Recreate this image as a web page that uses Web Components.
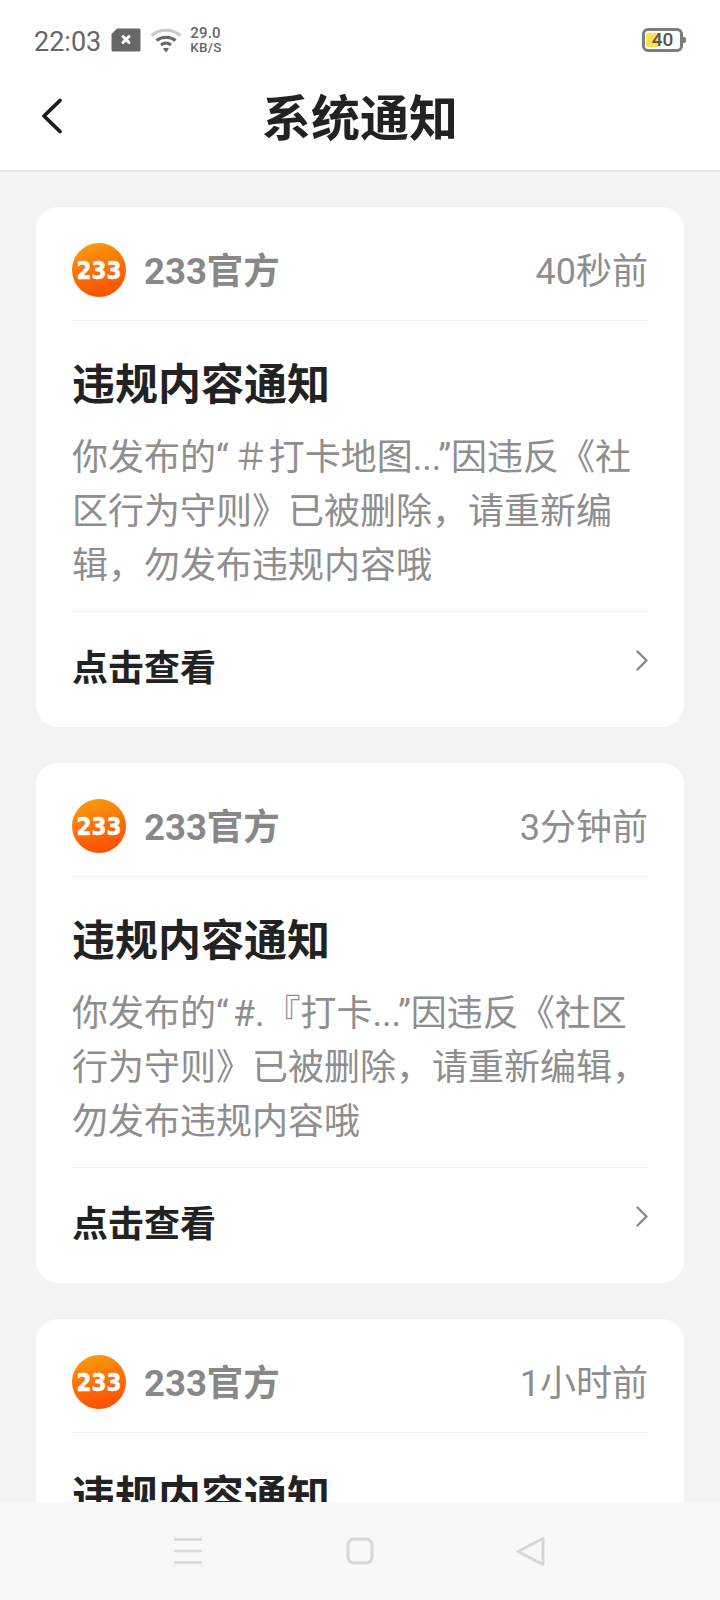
<!DOCTYPE html>
<html lang="zh"><head><meta charset="utf-8">
<style>
html,body{margin:0;padding:0;width:720px;height:1600px;overflow:hidden;background:#f4f4f4;font-family:Roboto,"Noto Sans CJK SC",sans-serif}
.q{letter-spacing:4px}
</style></head><body>
<app-screen>
<status-bar slot="top"></status-bar>
<title-bar slot="top" title="系统通知"></title-bar>
<notice-card time="40秒前">你发布的<span class="q">“</span>＃打卡地图...”因违反《社<br>区行为守则》已被删除，请重新编<br>辑，勿发布违规内容哦</notice-card>
<notice-card time="3分钟前">你发布的<span class="q">“</span>#.『打卡...”因违反《社区<br>行为守则》已被删除，请重新编辑，<br>勿发布违规内容哦</notice-card>
<notice-card time="1小时前"></notice-card>
<nav-bar slot="bottom"></nav-bar>
</app-screen>
<script>
const def=(name,html,init)=>customElements.define(name,class extends HTMLElement{
  constructor(){super();this.attachShadow({mode:'open'}).innerHTML=html;}
  connectedCallback(){init&&init(this,this.shadowRoot);}
});
def('app-screen',`<style>
:host{display:flex;flex-direction:column;width:720px;height:1600px;overflow:hidden}
.main{flex:1;min-height:0;overflow:hidden;padding:35px 36px 0;display:flex;flex-direction:column;gap:36px}
::slotted(notice-card){flex:none}
</style><slot name="top"></slot><div class="main"><slot></slot></div><slot name="bottom"></slot>`);
def('status-bar',`<style>
:host{display:flex;align-items:center;height:80px;background:#fff;padding:0 34px;box-sizing:border-box;color:#666;font-family:Roboto,sans-serif}
.t{font-size:27px;line-height:1;margin-top:5px}
.sim{margin-left:10px;display:block}
.wifi{margin-left:9px;margin-top:-1px;display:block}
.sp{margin-left:8px;font-size:15px;line-height:14px;font-weight:500;letter-spacing:.2px}
.sp b{display:block;font-weight:500}.sp i{display:block;font-style:normal;font-size:13.5px}
.grow{flex:1}
.bat{position:relative;width:41px;height:24px;border:3px solid #7d7d7d;border-radius:6px;box-sizing:border-box;margin-right:3px;background:#fff}
.bat::before{content:"";position:absolute;left:1px;top:2px;bottom:2px;width:13px;background:#fbe04f;border-radius:2px}
.bat::after{content:"";position:absolute;right:-6px;top:6px;width:3px;height:6px;background:#7d7d7d;border-radius:0 2px 2px 0}
.bat span{position:absolute;inset:0;text-align:center;font-size:19px;line-height:18px;font-weight:500;color:#555}
</style><span class="t">22:03</span>
<svg class="sim" width="30" height="24" viewBox="0 0 30 24"><path d="M6 .5H28a1.500 1.500 0 0 1 1.500 1.500V22a1.500 1.500 0 0 1-1.500 1.500H2A1.500 1.500 0 0 1 .5 22V6z" fill="#666"/><path d="M12 8.500l6 6M18 8.500l-6 6" stroke="#fff" stroke-width="3" stroke-linecap="round"/></svg>
<svg class="wifi" width="32" height="26" viewBox="0 0 32 26"><path d="M1.500 8.500C9.500 1.500 22.500 1.500 30.500 8.500" fill="none" stroke="#c9c9c9" stroke-width="3"/><path d="M6.500 13.500C12 9 20 9 25.500 13.500" fill="none" stroke="#666" stroke-width="3"/><path d="M11 18C14 15.700 18 15.700 21 18" fill="none" stroke="#666" stroke-width="3"/><path d="M13 21.500Q16 20 19 21.500L16 25.500z" fill="#666"/></svg>
<span class="sp"><b>29.0</b><i>KB/S</i></span><span class="grow"></span>
<span class="bat"><span>40</span></span>`);
def('title-bar',`<style>
:host{display:block;position:relative;height:90px;background:#fff;border-bottom:2px solid #e6e6e6}
h1{margin:0;text-align:center;font:700 49px/70px "Noto Sans CJK SC",sans-serif;color:#222}
svg{position:absolute;left:40px;top:16px}
</style><svg width="24" height="40" viewBox="0 0 24 40"><path d="M20 4.500L4 20l16 15.500" fill="none" stroke="#1c1c1c" stroke-width="3.800" stroke-linecap="round" stroke-linejoin="round"/></svg><h1></h1>`,
(el,r)=>{r.querySelector('h1').textContent=el.getAttribute('title');});
def('notice-card',`<style>
:host{display:block;background:#fff;border-radius:22px;padding:0 36px;height:520px;box-sizing:border-box;font-family:Roboto,"Noto Sans CJK SC",sans-serif}
.head{display:flex;align-items:center;height:113px;border-bottom:1px solid #efefef;padding-top:0}
.logo{display:block;margin-right:18px;margin-top:13px}
.name{font:700 36.5px/1 Roboto,"Noto Sans CJK SC",sans-serif;color:#888;flex:1;padding-top:17px}
.time{font-size:36px;line-height:1;color:#8e8e8e;padding-top:17px}
h2{margin:0;font:700 43px/60px "Noto Sans CJK SC",sans-serif;color:#222;padding-top:30px}
.body{font:400 36px/54px Roboto,"Noto Sans CJK SC",sans-serif;color:#8e8e8e;padding-top:20px;height:162px;padding-bottom:18px;border-bottom:1px solid #efefef}
.foot{display:flex;justify-content:space-between;height:115px}
.foot b{font:700 36px/106px "Noto Sans CJK SC",sans-serif;color:#222}
.foot svg{margin-top:38px;display:block}
</style><div class="head">
<svg class="logo" width="54" height="54" viewBox="0 0 54 54"><defs><linearGradient id="g" x1="0.3" y1="0" x2="0.6" y2="1"><stop offset="0" stop-color="#fb9c0a"/><stop offset=".55" stop-color="#fd6d06"/><stop offset="1" stop-color="#fc4f06"/></linearGradient></defs><circle cx="27" cy="27" r="27" fill="url(#g)"/><text x="27" y="35.500" text-anchor="middle" font-family="'DejaVu Sans',sans-serif" font-weight="700" font-size="24" textLength="45" lengthAdjust="spacingAndGlyphs" fill="#fff" stroke="#fff" stroke-width=".5">233</text></svg>
<span class="name">233官方</span><span class="time"></span></div>
<h2>违规内容通知</h2><div class="body"><slot></slot></div>
<div class="foot"><b>点击查看</b><svg width="12" height="21" viewBox="0 0 12 21"><path d="M1.500 1.500L10.500 10.500 1.500 19.500" fill="none" stroke="#888" stroke-width="2.400" stroke-linecap="round" stroke-linejoin="round"/></svg></div>`,
(el,r)=>{r.querySelector('.time').textContent=el.getAttribute('time');});
def('nav-bar',`<style>
:host{display:block;flex:none;height:98px;background:#f8f8f8;position:relative}
svg{display:block;position:absolute}
</style>
<svg style="left:174px;top:36px" width="28" height="27" viewBox="0 0 28 27" fill="none" stroke="#d8d8d8" stroke-width="2.500"><path d="M0 1.500H28M0 13H28M0 24.500H28"/></svg>
<svg style="left:346px;top:35px" width="28" height="28" viewBox="0 0 28 28" fill="none" stroke="#d6d6d6" stroke-width="3"><rect x="2" y="2" width="24" height="24" rx="6"/></svg>
<svg style="left:516px;top:34px" width="29" height="31" viewBox="0 0 29 31" fill="none" stroke="#d6d6d6" stroke-width="3" stroke-linejoin="round"><path d="M27 2.500V28.500L2 15.500z"/></svg>`);
</script>
</body></html>
